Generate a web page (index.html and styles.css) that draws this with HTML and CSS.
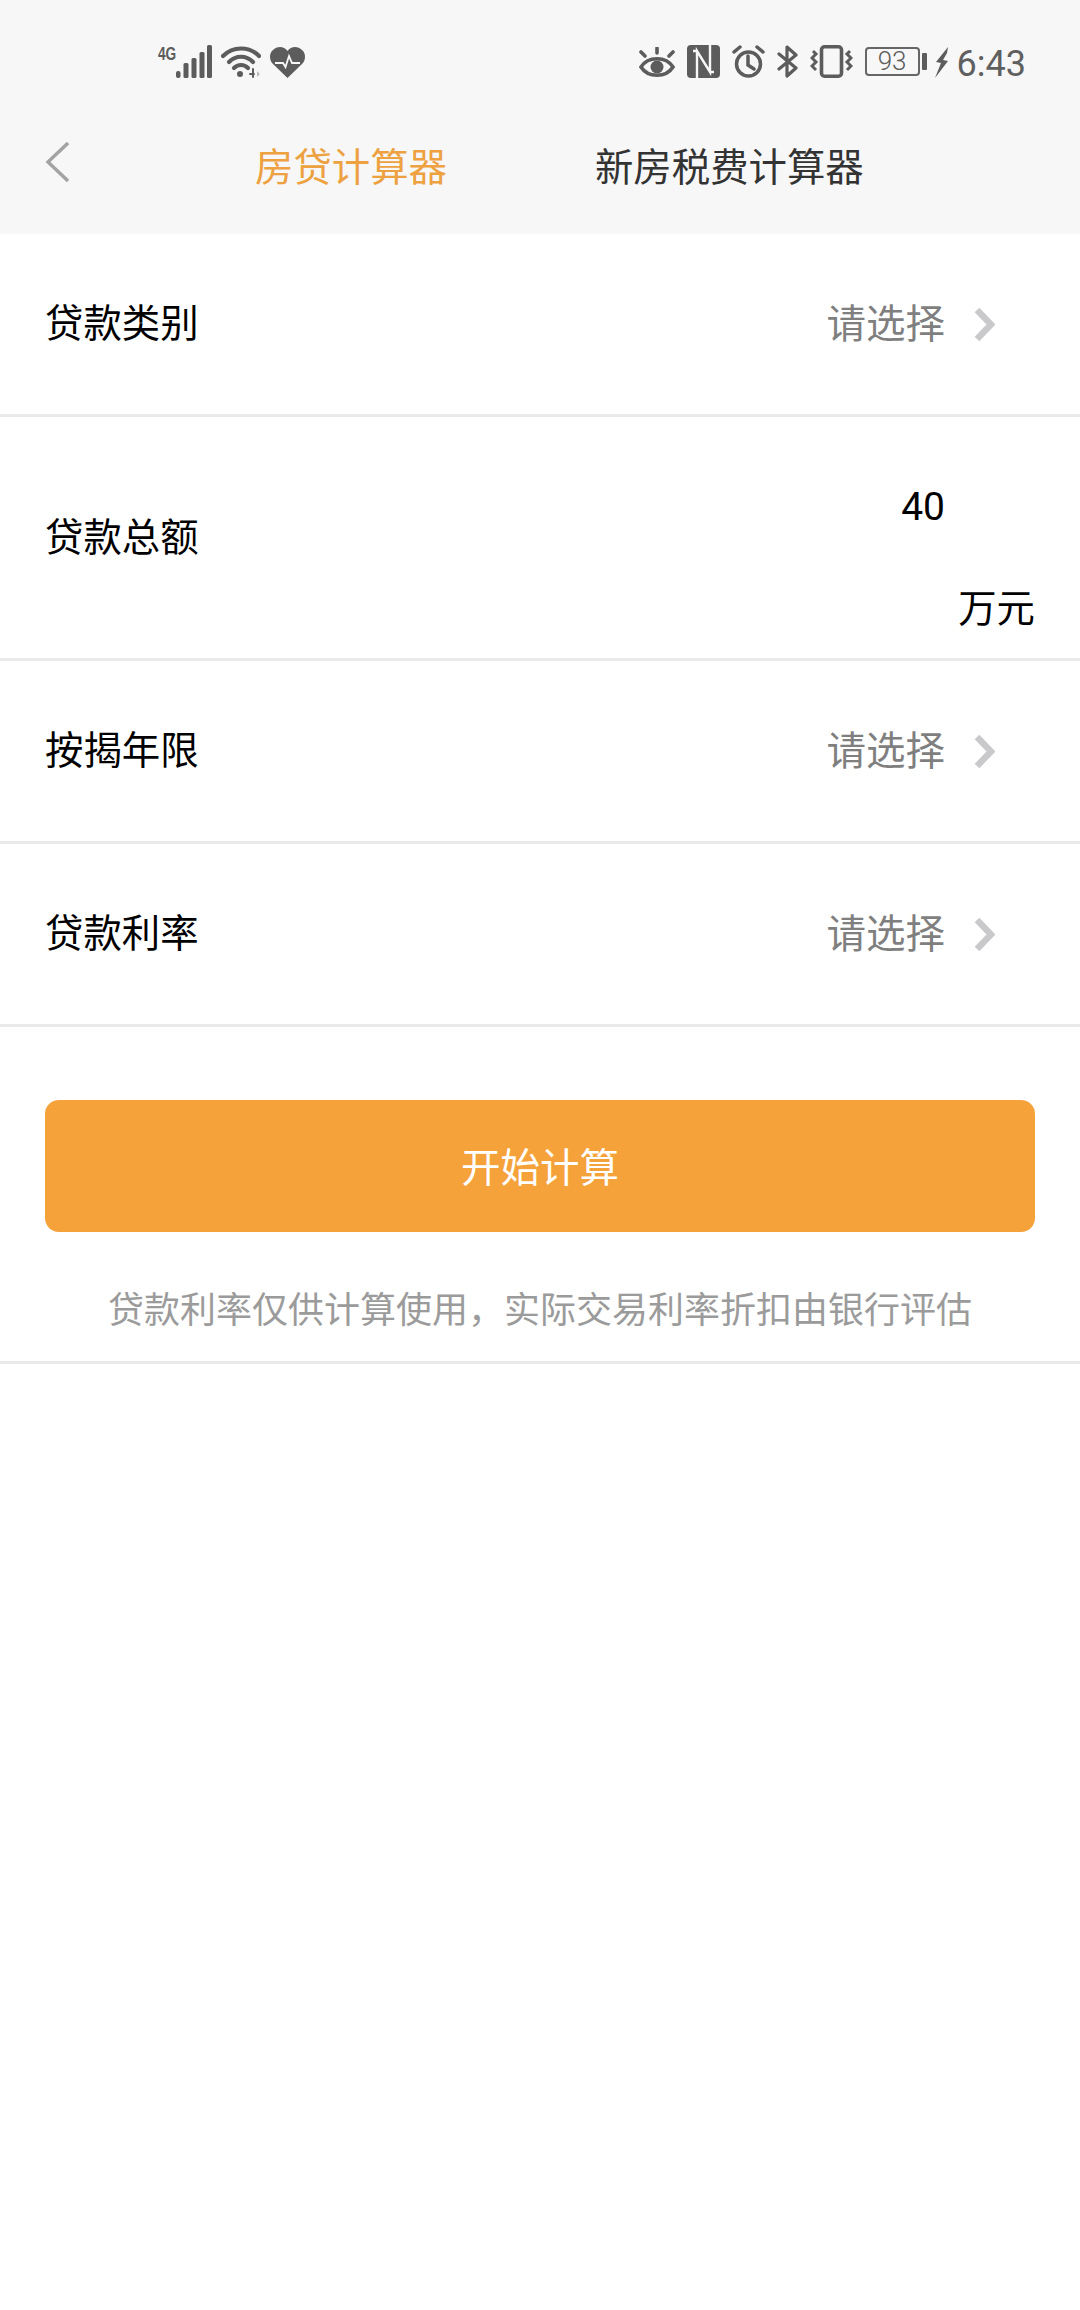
FILE: index.html
```html
<!DOCTYPE html>
<html lang="zh-CN">
<head>
  <meta charset="UTF-8">
  <meta name="viewport" content="width=device-width, initial-scale=1.0">
  <title>房贷计算器</title>
  <link rel="stylesheet" href="styles.css">
</head>
<body>
  <div class="header">
    <div class="status-bar">
      <div class="status-left">
        <span class="net-label">4G</span>
        <svg class="ic-signal" width="36" height="33" viewBox="0 0 36 33" fill="#5c5c5c">
          <rect x="0" y="26" width="4.500" height="7" rx="2"/>
          <rect x="7.500" y="18" width="5" height="15" rx="1.500"/>
          <rect x="15.500" y="13" width="5" height="20" rx="1.500"/>
          <rect x="23.500" y="7" width="5" height="26" rx="1.500"/>
          <rect x="31" y="0" width="5" height="33" rx="1.500"/>
        </svg>
        <svg class="ic-wifi" width="40" height="33" viewBox="0 0 40 33" fill="none" stroke="#5c5c5c" stroke-width="4.200" stroke-linecap="round">
          <path d="M2 11C12 1 28 1 38 11"/>
          <path d="M8 17C15 10 25 10 32 17"/>
          <path d="M13 23C17 19 23 19 27 23"/>
          <circle cx="19" cy="29" r="3" fill="#5c5c5c" stroke="none"/>
          <path d="M32 24V32M29 29H33" stroke-width="2"/>
          <path d="M36 26L39 29L36 32Z" fill="#bbb" stroke="none"/>
        </svg>
        <svg class="ic-heart" width="35" height="31" viewBox="0 0 35 31">
          <path fill="#5c5c5c" d="M17.500 31L3 17C-1 13 -1 6 3 3C7 -1 14 -1 17.500 4C21 -1 28 -1 32 3C36 6 36 13 32 17Z"/>
          <path fill="none" stroke="#f7f7f7" stroke-width="1.800" d="M5 16H13L15.500 20L19 9L22 16H30"/>
        </svg>
      </div>
      <div class="status-right">
        <svg width="36" height="31" viewBox="0 0 36 31" fill="none" stroke="#5c5c5c" stroke-width="3.600" stroke-linecap="round">
          <path d="M2 20C9 9 27 9 34 20C27 31 9 31 2 20Z"/>
          <circle cx="18" cy="20" r="6.500" fill="#5c5c5c" stroke="none"/>
          <path d="M18 1V6M2 5L6 9M34 5L30 9"/>
        </svg>
        <svg width="33" height="33" viewBox="0 0 33 33">
          <rect width="33" height="33" rx="4" fill="#5c5c5c"/>
          <path fill="none" stroke="#f7f7f7" stroke-width="2.400" d="M10 33V6L23 27V0M10 6H6M23 27H27"/>
        </svg>
        <svg width="33" height="33" viewBox="0 0 33 33" fill="none" stroke="#5c5c5c" stroke-width="3.500" stroke-linecap="round">
          <circle cx="16.500" cy="19" r="12"/>
          <path d="M16 11V20L22 24M2 7L8 2M31 7L25 2"/>
        </svg>
        <svg width="21" height="33" viewBox="0 0 21 33" fill="none" stroke="#5c5c5c" stroke-width="3.200" stroke-linecap="round" stroke-linejoin="round">
          <path d="M2 9L19 23L10 31V2L19 10L2 24"/>
        </svg>
        <svg width="43" height="33" viewBox="0 0 43 33" fill="none" stroke="#5c5c5c" stroke-width="3.600">
          <rect x="11.500" y="1.800" width="20" height="29.400" rx="3"/>
          <path stroke-width="3" d="M3 6L6 9L2 13L6 17L2 21L6 25M40 6L37 9L41 13L37 17L41 21L37 25"/>
        </svg>
        <div class="battery"><span class="battery-num">93</span></div>
        <div class="battery-nub"></div>
        <svg class="ic-bolt" width="13" height="31" viewBox="0 0 13 31">
          <path fill="#5c5c5c" d="M13 0L1 15L6 16L0 31L13 14L8 13L12 6Z"/>
        </svg>
        <span class="clock">6:43</span>
      </div>
    </div>
    <div class="nav">
      <svg class="back" width="24" height="40" viewBox="0 0 24 40" fill="none" stroke="#a3a3a3" stroke-width="3.400">
        <path d="M23 1L3 20L23 39"/>
      </svg>
      <span class="tab tab-active">房贷计算器</span>
      <span class="tab">新房税费计算器</span>
    </div>
  </div>

  <div class="row">
    <span class="label">贷款类别</span>
    <div class="picker">
      <span class="placeholder">请选择</span>
      <svg width="21" height="33" viewBox="0 0 21 33" fill="none" stroke="#c9c9cc" stroke-width="6.500">
        <path d="M3 2L17 16.500L3 31"/>
      </svg>
    </div>
  </div>

  <div class="row row-amount">
    <span class="label">贷款总额</span>
    <div class="amount">
      <span class="amount-num">40</span>
      <span class="amount-unit">万元</span>
    </div>
  </div>

  <div class="row">
    <span class="label">按揭年限</span>
    <div class="picker">
      <span class="placeholder">请选择</span>
      <svg width="21" height="33" viewBox="0 0 21 33" fill="none" stroke="#c9c9cc" stroke-width="6.500">
        <path d="M3 2L17 16.500L3 31"/>
      </svg>
    </div>
  </div>

  <div class="row">
    <span class="label">贷款利率</span>
    <div class="picker">
      <span class="placeholder">请选择</span>
      <svg width="21" height="33" viewBox="0 0 21 33" fill="none" stroke="#c9c9cc" stroke-width="6.500">
        <path d="M3 2L17 16.500L3 31"/>
      </svg>
    </div>
  </div>

  <div class="actions">
    <button class="calc-btn">开始计算</button>
    <p class="note">贷款利率仅供计算使用，实际交易利率折扣由银行评估</p>
  </div>
</body>
</html>
```

FILE: styles.css
```css
* {
  box-sizing: border-box;
}

html, body {
  margin: 0;
  background-color: #fff;
}

body {
  width: 1080px;
  height: 2310px;
  overflow: hidden;
  font-family: "Noto Sans CJK SC", "Liberation Sans", sans-serif;
  color: #000;
}

.header {
  height: 234px;
  background-color: #f7f7f7;
}

.status-bar {
  height: 124px;
  padding: 45px 54px 0 158px;
  display: flex;
  justify-content: space-between;
  align-items: flex-start;
}

.status-left,
.status-right {
  display: flex;
  align-items: flex-start;
}

.net-label {
  font-family: "Liberation Sans", sans-serif;
  font-size: 19px;
  line-height: 17px;
  font-weight: 700;
  color: #5c5c5c;
  width: 18px;
  transform: scaleX(0.72);
  transform-origin: left top;
}

.ic-wifi {
  margin-left: 9px;
}

.ic-heart {
  margin-left: 9px;
  margin-top: 2px;
}

.status-right svg {
  margin-right: 12px;
}

.status-right svg:first-child {
  margin-top: 2px;
}

.battery {
  width: 55px;
  height: 29px;
  margin-top: 2px;
  border: 2px solid #666;
  border-radius: 4px;
  text-align: center;
  font-family: "Roboto", sans-serif;
  font-size: 26px;
  font-weight: 300;
  line-height: 25px;
  color: #5c5c5c;
}

.battery-nub {
  width: 5px;
  height: 17px;
  margin: 8px 0 0 2px;
  background-color: #5c5c5c;
  border-radius: 1px;
}

.status-right .ic-bolt {
  margin: 2px 9px 0 8px;
}

.clock {
  font-family: "Roboto", sans-serif;
  font-size: 36px;
  line-height: 35px;
  color: #5f5f5f;
  margin-top: 2px;
}

.nav {
  height: 110px;
  padding: 0 0 26px 45px;
  display: flex;
  align-items: center;
}

.back {
  margin-top: -8px;
}

.tab {
  font-size: 38.400px;
  line-height: 50px;
  color: #333;
  margin-left: 148px;
  padding-bottom: 5px;
}

.tab-active {
  color: #eda140;
  margin-left: 186px;
}

.row {
  height: 183px;
  padding: 0 85px 0 45px;
  display: flex;
  justify-content: space-between;
  align-items: center;
  border-bottom: 3px solid #eaeaea;
}

.label {
  font-size: 38.400px;
  padding-bottom: 8px;
}

.picker {
  display: flex;
  align-items: center;
  gap: 29px;
}

.placeholder {
  font-size: 39.500px;
  color: #7f7f7f;
  padding-bottom: 8px;
}

.row-amount {
  height: 244px;
  padding-right: 45px;
}

.amount {
  display: flex;
  flex-direction: column;
  align-items: flex-end;
  gap: 47px;
  padding-top: 36px;
}

.amount-num {
  font-family: "Roboto", sans-serif;
  font-size: 39px;
  line-height: 52px;
  margin-right: 90px;
}

.amount-unit {
  font-size: 38.400px;
  line-height: 50px;
}

.actions {
  padding-top: 73px;
  border-bottom: 3px solid #eaeaea;
  height: 337px;
}

.calc-btn {
  display: block;
  width: 990px;
  height: 132px;
  margin: 0 45px;
  padding: 0 0 3px;
  border: none;
  border-radius: 14px;
  background-color: #f5a23b;
  color: #fff;
  font-family: "Noto Sans CJK SC", sans-serif;
  font-size: 39.500px;
}

.note {
  margin: 50px 0 0;
  text-align: center;
  font-size: 36px;
  line-height: 50px;
  color: #9b9b9b;
}
```
